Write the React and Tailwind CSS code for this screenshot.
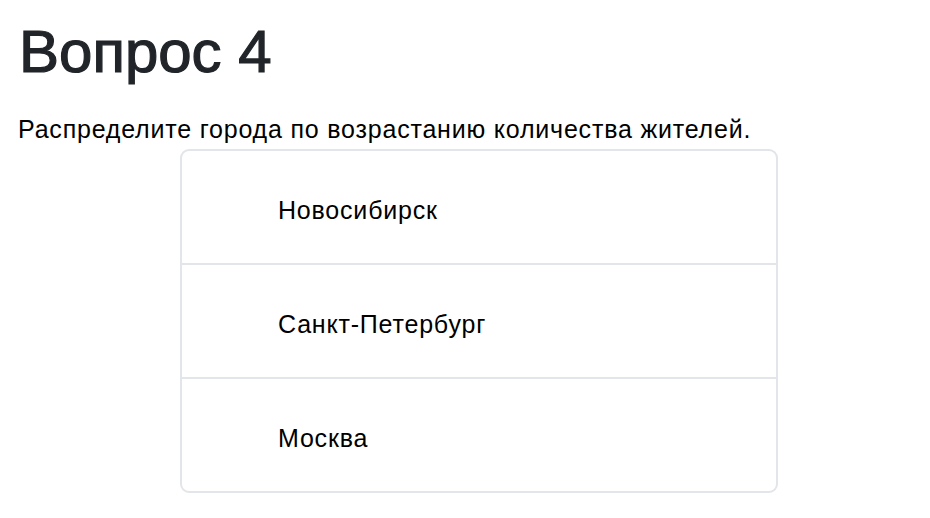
import React from 'react';

const cities = ['Новосибирск', 'Санкт-Петербург', 'Москва'];

export default function App() {
  return (
    <div className="min-h-screen bg-white font-['Liberation_Sans',Arial,sans-serif]">
      <div className="pt-[16px] pl-[18px]">
        <h1 className="text-[60px] leading-[72px] font-normal text-[#212529] pl-[1px] [-webkit-text-stroke:1.2px_#212529]">
          Вопрос 4
        </h1>
        <p className="mt-[26px] text-[25px] leading-[30px] tracking-[0.8px] text-black">
          Распределите города по возрастанию количества жителей.
        </p>
      </div>
      <ul className="ml-[180px] mt-[5px] w-[598px] rounded-[9px] border-2 border-[#e2e5e9]">
        {cities.map((c, i) => (
          <li
            key={c}
            className={
              i === 0
                ? 'h-[112px] flex items-center pt-[7px] pl-[96px] text-[25px] tracking-[0.8px] text-black'
                : 'h-[114px] flex items-center pt-[7px] pl-[96px] text-[25px] tracking-[0.8px] text-black border-t-2 border-[#e2e5e9]'
            }
          >
            {c}
          </li>
        ))}
      </ul>
    </div>
  );
}
